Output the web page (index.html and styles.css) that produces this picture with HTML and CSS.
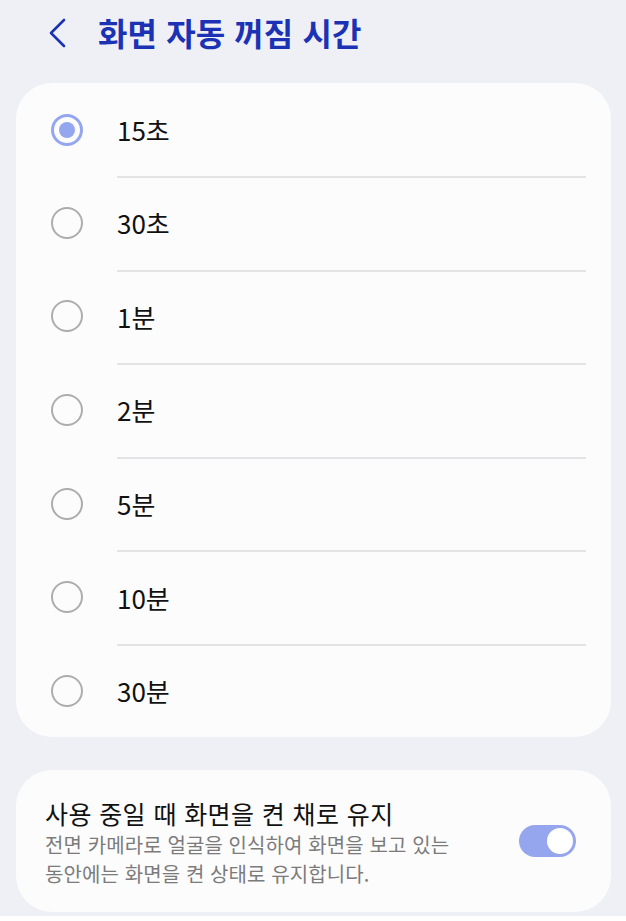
FILE: index.html
```html
<!DOCTYPE html>
<html lang="ko">
<head>
    <meta charset="UTF-8">
    <meta name="viewport" content="width=device-width, initial-scale=1.0">
    <title>화면 자동 꺼짐 시간</title>
    <link rel="stylesheet" href="styles.css">
</head>
<body>
    <div class="page">
        <header class="header">
            <button class="back" aria-label="뒤로">
                <svg width="20" height="30" viewBox="0 0 20 30">
                    <path d="M17 2 L4 15 L17 28" fill="none" stroke="#1b32b4" stroke-width="2.6" stroke-linecap="round" stroke-linejoin="round"/>
                </svg>
            </button>
            <h1 class="title">화면 자동 꺼짐 시간</h1>
        </header>

        <div class="card options">
            <label class="option checked"><span class="radio"></span><span class="label">15초</span></label>
            <label class="option"><span class="radio"></span><span class="label">30초</span></label>
            <label class="option"><span class="radio"></span><span class="label">1분</span></label>
            <label class="option"><span class="radio"></span><span class="label">2분</span></label>
            <label class="option"><span class="radio"></span><span class="label">5분</span></label>
            <label class="option"><span class="radio"></span><span class="label">10분</span></label>
            <label class="option"><span class="radio"></span><span class="label">30분</span></label>
        </div>

        <div class="card keep">
            <div class="keep-text">
                <div class="keep-title">사용 중일 때 화면을 켠 채로 유지</div>
                <div class="keep-desc">전면 카메라로 얼굴을 인식하여 화면을 보고 있는<br>동안에는 화면을 켠 상태로 유지합니다.</div>
            </div>
            <div class="switch on"><span class="knob"></span></div>
        </div>
    </div>
</body>
</html>
```

FILE: styles.css
```css
* {
    margin: 0;
    padding: 0;
    box-sizing: border-box;
}

body {
    font-family: 'Noto Sans CJK KR', 'Noto Sans', sans-serif;
    background-color: #ffffff;
    color: #111111;
}

.page {
    width: 626px;
    height: 916px;
    padding: 0 15px 0 16px;
    overflow: hidden;
    background-color: #eff0f5;
}

.header {
    display: flex;
    align-items: center;
    height: 64px;
    margin-bottom: 19px;
}

.back {
    display: flex;
    align-items: center;
    background: none;
    border: none;
    margin-left: 31px;
    margin-right: 31px;
    margin-top: 1px;
}

.title {
    font-size: 32px;
    font-weight: 700;
    color: #1b32b4;
    letter-spacing: 0.1px;
}

.card {
    background-color: #fcfcfc;
    border-radius: 36px;
}

.options {
    padding: 0 25px 0 35px;
    height: 654px;
}

.option {
    display: flex;
    align-items: center;
    height: 93.6px;
    position: relative;
}

.option + .option::before {
    content: "";
    position: absolute;
    top: 0;
    left: 66px;
    right: 0;
    height: 2px;
    background-color: #e4e4e6;
}

.option:first-child {
    height: 93px;
}

.radio {
    width: 32px;
    height: 32px;
    border-radius: 50%;
    border: 2.5px solid #adadad;
    margin-right: 34px;
    flex-shrink: 0;
    display: flex;
    align-items: center;
    justify-content: center;
}

.option.checked .radio {
    border: 3px solid #94a6f0;
}

.option.checked .radio::after {
    content: "";
    width: 16px;
    height: 16px;
    border-radius: 50%;
    background-color: #94a6f0;
}

.label {
    font-size: 26px;
    color: #111111;
}

.keep {
    margin-top: 33px;
    height: 142px;
    display: flex;
    align-items: center;
    padding: 0 35px 0 29px;
}

.keep-text {
    flex: 1;
    padding-top: 2px;
}

.keep-title {
    font-size: 25px;
    letter-spacing: 0.4px;
    color: #111111;
    line-height: 34px;
}

.keep-desc {
    font-size: 20px;
    letter-spacing: 0.1px;
    color: #7b7b7b;
    line-height: 29px;
}

.switch {
    width: 57px;
    height: 32px;
    border-radius: 16px;
    background-color: #95a6ef;
    display: flex;
    align-items: center;
    justify-content: flex-end;
    padding-right: 3px;
}

.knob {
    width: 26px;
    height: 26px;
    border-radius: 50%;
    background-color: #ffffff;
}
```
